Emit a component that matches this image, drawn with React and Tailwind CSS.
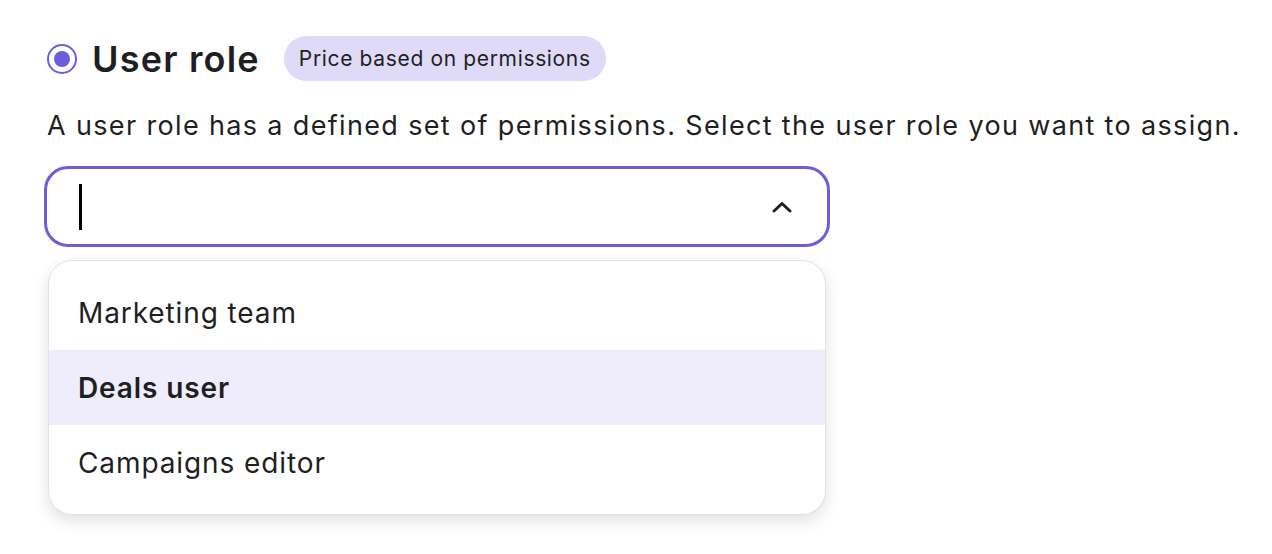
import React from 'react';

const roles = ['Marketing team', 'Deals user', 'Campaigns editor'];

export default function App() {
  const selected = 'Deals user';

  return (
    <div className="min-h-screen w-full bg-white text-[#1f1f23]" style={{ fontFamily: 'Inter, "Noto Sans", sans-serif' }}>
      <div className="pl-[44px] pt-[36px]">
        {/* Title row */}
        <div className="flex items-center pl-[3px]">
          <span className="flex h-[30px] w-[30px] items-center justify-center rounded-full border-2 border-[#6b5fd9]">
            <span className="h-[16px] w-[16px] rounded-full bg-[#6b5fd9]" />
          </span>
          <h1 className="ml-[15px] text-[36px] font-semibold leading-none tracking-[1.2px]">User role</h1>
          <span className="ml-[24px] rounded-full bg-[#dedaf8] px-[15px] py-[10px] text-[21px] leading-[25px] tracking-[0.65px]">
            Price based on permissions
          </span>
        </div>

        <p className="mt-[30px] pl-[3px] text-[27px] leading-[30px] tracking-[1.35px] whitespace-nowrap">
          A user role has a defined set of permissions. Select the user role you want to assign.
        </p>

        {/* Combobox */}
        <div className="mt-[25px] w-[786px]">
          <div className="flex h-[81px] items-center justify-between rounded-[24px] border-[3px] border-[#6b5fd9] pl-[32px] pr-[34px]">
            <span className="h-[46px] w-[3px] bg-black" />
            <svg width="22" height="14" viewBox="0 0 22 14" fill="none">
              <path d="M3 11 L11 3.5 L19 11" stroke="#1f1f23" strokeWidth="3" strokeLinecap="round" strokeLinejoin="round" />
            </svg>
          </div>

          <ul className="mx-[4px] mt-[13px] overflow-hidden rounded-[24px] border border-[#e2e2e4] bg-white py-[14px] shadow-[0_6px_16px_rgba(0,0,0,0.12)]">
            {roles.map((r) => (
              <li
                key={r}
                className={`flex h-[75px] items-center pl-[29px] text-[28px] tracking-[0.9px] ${
                  r === selected ? 'bg-[#efedfb] font-semibold' : ''
                }`}
              >
                {r}
              </li>
            ))}
          </ul>
        </div>
      </div>
    </div>
  );
}
